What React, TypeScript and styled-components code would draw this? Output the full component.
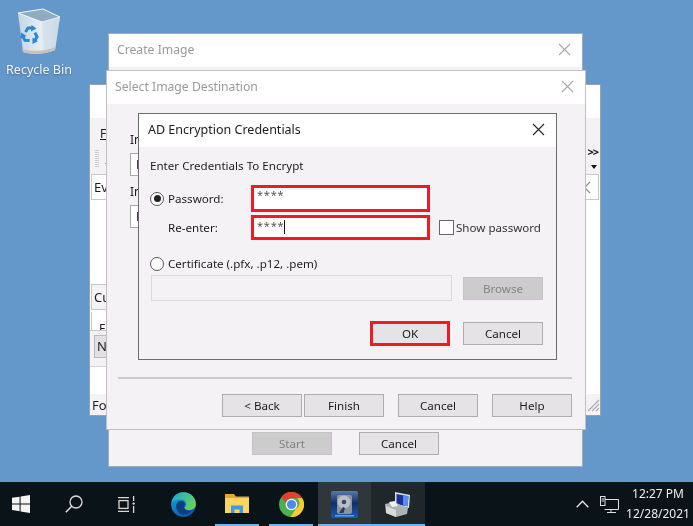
import React from "react";
import styled, { createGlobalStyle } from "styled-components";

const Global = createGlobalStyle`
  html, body { margin: 0; padding: 0; width: 693px; height: 526px; overflow: hidden; }
  #root { width: 693px; height: 526px; }
  * { box-sizing: border-box; }
`;

const Desktop = styled.div`
  width: 693px; height: 526px; display: flex; flex-direction: column;
  background: #6498cb; font-family: "Noto Sans", "Open Sans", sans-serif; font-size: 11.6px; color: #1c1c1c;
  overflow: hidden; filter: blur(.35px);
`;
const Workspace = styled.div`position: relative; height: 482px; flex: none;`;

const DesktopIcon = styled.div`
  position: absolute; left: 0; top: 7px; width: 78px; display: flex; flex-direction: column; align-items: center; gap: 7px;
  color: #f2f6fa; font-size: 12.5px; line-height: 16px; text-shadow: 0 1px 2px rgba(0,0,0,.35);
`;

const Win = styled.div<{ $x: number; $y: number; $w: number; $h: number; $edge: string }>`
  position: absolute; left: ${p => p.$x}px; top: ${p => p.$y}px; width: ${p => p.$w}px; height: ${p => p.$h}px;
  background: #f5f2f6; border: 1px solid ${p => p.$edge}; display: flex; flex-direction: column; overflow: hidden;
`;
const TitleBar = styled.div<{ $h: number; $pad: number; $active?: boolean }>`
  height: ${p => p.$h}px; flex: none; background: #fff; display: flex; align-items: center; justify-content: space-between;
  padding: 0 11px 2px ${p => p.$pad}px;
  color: ${p => p.$active ? "#202020" : "#9a9a9a"}; font-size: ${p => p.$active ? 12.5 : 12.2}px;
`;
const CloseGlyph = ({ c }: { c: string }) => (
  <svg width="13" height="13" viewBox="0 0 13 13"><path d="M1 1l11 11M12 1L1 12" stroke={c} strokeWidth="1.1" fill="none" /></svg>
);

const Btn = styled.div<{ $w?: number; $off?: boolean }>`
  width: ${p => p.$w ?? 80}px; height: 23px; flex: none; display: flex; align-items: center; justify-content: center;
  background: ${p => p.$off ? "#cccccc" : "#e6e3e7"}; border: 1px solid ${p => p.$off ? "#c4c4c4" : "#adadad"};
  color: ${p => p.$off ? "#838383" : "#1c1c1c"}; font-size: 11.6px;
`;

/* Back window (mostly hidden) */
const BackBody = styled.div`flex: 1; display: flex; flex-direction: column; background: #fff; position: relative;`;
const BackBand = styled.div`height: 56px; background: #f5f2f6; display: flex; flex-direction: column; align-items: flex-start; padding: 9px 0 0 10px; flex: none;`;
const MenuLetter = styled.span`text-decoration: underline; line-height: 14px; font-size: 12px;`;
const Grip = styled.div`
  width: 4px; height: 18px; margin-top: 9px; margin-left: -5px; position: relative;
  background: repeating-linear-gradient(to bottom, #cfcdd0 0 1px, #f5f2f6 1px 2px);
  &::after { content: ""; position: absolute; left: 10px; top: 13px; width: 2px; height: 1px; background: #5fc45f; }
`;
const Chevrons = styled.div`position: absolute; right: 2px; top: 28px; font-size: 11px; font-weight: 700; line-height: 12px; color: #111; letter-spacing: -1px;`;
const DownTri = styled.div`
  position: absolute; right: 3px; top: 47px; width: 0; height: 0;
  border-left: 3px solid transparent; border-right: 3px solid transparent; border-top: 4px solid #111;
`;
const TabBox = styled.div`
  height: 26px; margin-left: 1px; margin-right: 1px; display: flex; align-items: center; justify-content: space-between; background: #fff;
  border: 1px solid #c9c7ca; padding: 0 7px 0 2px; font-size: 13px; flex: none;
`;
const CuBox = styled.div`
  height: 26px; width: 60px; margin: 84px 0 0 1px; background: #f5f2f6; border: 1px solid #c9c7ca; padding-left: 2px; font-size: 13px; line-height: 24px; flex: none;
`;
const SubTab = styled.div`height: 18px; width: 40px; margin: 2px 0 0 1px; border-left: 1px solid #c9c7ca; font-size: 12px; padding: 11px 0 0 7px; line-height: 12px; overflow: hidden; flex: none;`;
const NeBand = styled.div`height: 37px; width: 60px; background: #f5f2f6; border-top: 1px solid #c9c7ca; border-bottom: 1px solid #d6d4d7; padding: 4px 0 0 4px; flex: none;`;
const NeBtn = styled.div`width: 56px; height: 23px; background: #e2e0e3; border: 1px solid #b9b7ba; padding-left: 2px; line-height: 21px; font-size: 13px;`;
const FoRow = styled.div`margin-top: auto; height: 21px; background: #f5f2f6; display: flex; justify-content: space-between; align-items: center; padding-left: 2px; font-size: 13px; flex: none;`;

/* Create Image footer */
const CreateFooter = styled.div`margin-top: auto; height: 34px; display: flex; padding-left: 143px; gap: 27px; flex: none;`;

/* Select Image Destination */
const SelectBody = styled.div`flex: 1; display: flex; flex-direction: column; padding: 28px 13px 0 11px; position: relative;`;
const StubLabel = styled.div`line-height: 16px; height: 16px; font-size: 12px; margin-left: 12px;`;
const StubField = styled.div<{ $gap: number }>`
  width: 60px; height: 23px; margin: 5px 0 ${p => p.$gap}px 12px; background: #fff; border: 1px solid #a9a9a9; padding-left: 5px; line-height: 21px; font-size: 12px;
`;
const Divider = styled.div`height: 2px; background: #c9c9c9; margin-top: auto;`;
const WizardRow = styled.div`display: flex; justify-content: flex-end; margin: 15px 0 12px; gap: 2px;`;
const Spacer = styled.div<{ $w: number }>`width: ${p => p.$w}px; flex: none;`;

/* AD dialog */
const DialogBody = styled.div`flex: 1; display: flex; flex-direction: column; padding: 11px 13px 0 11px;`;
const Heading = styled.div`height: 16px; line-height: 16px; margin-bottom: 11px;`;
const CredRow = styled.div<{ $mb: number }>`
  display: grid; grid-template-columns: 101px 179px auto; align-items: center; margin-bottom: ${p => p.$mb}px;
`;
const RadioLabel = styled.div`display: flex; align-items: center; gap: 4px; line-height: 16px;`;
const RadioDot = styled.span<{ $on?: boolean }>`
  width: 14px; height: 14px; border-radius: 50%; border: 1px solid #555; background: #fff; flex: none; position: relative; display: inline-block;
  &::after { content: ""; display: ${p => p.$on ? "block" : "none"}; position: absolute; inset: 2.5px; border-radius: 50%; background: #222; }
`;
const IndentLabel = styled.div`padding-left: 18px; line-height: 16px;`;
const RedField = styled.div<{ $h: number; $pt: number }>`
  height: ${p => p.$h}px; border: 3px solid #ed1c24; background: #fff; display: flex; align-items: flex-start; padding: ${p => p.$pt}px 0 0 3px;
  font-size: 11px; line-height: 12px; color: #555; letter-spacing: .8px;
`;
const Caret = styled.span`width: 1px; height: 14px; background: #111; flex: none;`;
const ShowPw = styled.div`display: flex; align-items: center; gap: 2px; margin-left: 9px; color: #333;`;
const Check = styled.span`width: 15px; height: 15px; background: #fff; border: 1px solid #666; flex: none;`;
const CertInputRow = styled.div`display: flex; justify-content: space-between; align-items: center; margin: 3px 0 20px 1px;`;
const CertInput = styled.div`width: 301px; height: 26px; background: #f5f2f6; border: 1px solid #dcdadd;`;
const DialogButtons = styled.div`display: flex; justify-content: flex-end; align-items: center; gap: 13px;`;
const OkFrame = styled.div`width: 80px; height: 25px; border: 3px solid #ed1c24; background: #e6e3e7; display: flex; align-items: center; justify-content: center;`;

/* Taskbar */
const Taskbar = styled.div`height: 44px; flex: none; background: #0a1318; display: flex; align-items: stretch; color: #f2f2f2;`;
const TaskItem = styled.div<{ $w: number; $ml?: number; $bg?: string; $line?: boolean; $pl?: number }>`
  width: ${p => p.$w}px; margin-left: ${p => p.$ml ?? 0}px; padding-left: ${p => p.$pl ?? 0}px; flex: none; display: flex; align-items: center; justify-content: center;
  background: ${p => p.$bg ?? "transparent"}; box-shadow: ${p => p.$line ? "inset 0 -2px 0 #70b4e8" : "none"};
`;
const Tray = styled.div`margin-left: auto; display: flex; align-items: center; padding-right: 4px;`;
const Clock = styled.div`display: flex; flex-direction: column; align-items: center; font-size: 12px; line-height: 20px; margin-left: 8px; width: 62px; color: #eee;`;

const RecycleBin = () => (
  <svg width="44" height="48" viewBox="0 0 44 48">
    <defs>
      <linearGradient id="rb" x1="0" y1="0" x2="1" y2="0">
        <stop offset="0" stopColor="#c3d5e3" /><stop offset=".55" stopColor="#e6eef4" /><stop offset="1" stopColor="#b4c8d8" />
      </linearGradient>
    </defs>
    <path d="M1 6L26 2 43 10 38 43C30 47 14 48 6 45Z" fill="url(#rb)" />
    <path d="M1 6L26 2 43 10 25 15Z" fill="#8fabc0" stroke="#f0f5f8" strokeWidth="1" />
    <path d="M25 15L43 10 38 43 27 46Z" fill="#d4e0ea" opacity=".7" />
    <path d="M6 45C14 48 30 47 38 43L38.500 40C30 44 14 45 5.500 42Z" fill="#c9c2b9" />
    {[0, 120, 240].map(a => (
      <g key={a} transform={`rotate(${a} 13 28)`}>
        <path d="M8.500 25L11 21H15" fill="none" stroke="#2a86d8" strokeWidth="3" />
        <path d="M14.500 18L19.500 21.500 14 24.500Z" fill="#2a86d8" />
      </g>
    ))}
  </svg>
);
const WinLogo = () => (
  <svg width="18" height="18" viewBox="0 0 18 18" fill="#f4f4f4">
    <path d="M0 2.800L7.600 1.700V8.400H0zM8.600 1.600L18 0V8.400H8.600zM0 9.400H7.600V16.200L0 15.100zM8.600 9.400H18V18L8.600 16.400z" />
  </svg>
);
const SearchIcon = () => (
  <svg width="18" height="18" viewBox="0 0 18 18" fill="none" stroke="#dcdcdc" strokeWidth="1.300">
    <circle cx="11" cy="7" r="6" /><path d="M6.700 11.300L.8 17.200" strokeWidth="1.600" />
  </svg>
);
const TaskView = () => (
  <svg width="18" height="17" viewBox="0 0 18 17" fill="none" stroke="#d8d8d8" strokeWidth="1.300">
    <path d="M0 1.600h11M0 15.400h11" /><rect x="1" y="4.600" width="9" height="7.800" /><path d="M15.600 0v5M15.600 10v7" /><circle cx="15.600" cy="7.600" r="1.200" fill="#d8d8d8" stroke="none" />
  </svg>
);
const EdgeIcon = () => (
  <svg width="27" height="27" viewBox="0 0 24 24">
    <defs>
      <linearGradient id="e1" x1="0" y1="0" x2=".6" y2="1"><stop offset="0" stopColor="#1fa6e6" /><stop offset="1" stopColor="#0b5aa8" /></linearGradient>
      <linearGradient id="e2" x1="0" y1=".2" x2="1" y2=".7"><stop offset="0" stopColor="#1ea9cf" /><stop offset="1" stopColor="#6bd35a" /></linearGradient>
    </defs>
    <circle cx="12" cy="12" r="11" fill="url(#e1)" />
    <path d="M1.400 9.500C3 4 7 1 12 1c6.200 0 11 4.800 11 10.500 0 3.500-3 5.500-6 5.500-2.300 0-4-.9-4-1.900 0-.8 1.400-1.300 1.400-3.100C14.400 9.500 12.300 7.500 9.500 7.500 6 7.500 3 8 1.400 9.500z" fill="url(#e2)" />
    <path d="M5.500 13.500C5.500 10.500 7.600 8.800 10 8.800c2 0 3.300 1.300 3.300 3 0 .8-.6 1.500-.9 2.200-.4 1.500 1.800 3.400 5.100 3.400 1 0 1.600-.1 2.200-.3-1.800 2.500-4.500 3.900-7.700 3.900-3.800 0-6.500-4-6.500-7.500z" fill="#0d3f7f" />
  </svg>
);
const FolderIcon = () => (
  <svg width="24" height="20" viewBox="0 0 24 20">
    <path d="M0 0h9l2 2.500h13v16H0z" fill="#e0a92e" />
    <path d="M0 4h24v15H0z" fill="#fbd563" />
    <path d="M6 19v-7.500h12V19h-3.500v-3.500h-5V19z" fill="#3f9be0" />
  </svg>
);
const ChromeIcon = () => (
  <svg width="25" height="25" viewBox="0 0 24 24">
    <circle cx="12" cy="12" r="12" fill="#4caf50" />
    <path d="M12 0a12 12 0 0 1 10.400 6H12a6 6 0 0 0-5.700 4.100L2.100 5A12 12 0 0 1 12 0z" fill="#df4133" />
    <path d="M22.400 6A12 12 0 0 1 11 24l5.300-8a6 6 0 0 0 1-10z" fill="#fcc934" />
    <circle cx="12" cy="12" r="5.600" fill="#fff" /><circle cx="12" cy="12" r="4.400" fill="#4a8df0" />
  </svg>
);
const DiskIcon = () => (
  <svg width="27" height="27" viewBox="0 0 27 27">
    <defs><linearGradient id="d1" x1="0" y1="0" x2="0" y2="1"><stop offset="0" stopColor="#587aa4" /><stop offset=".45" stopColor="#0f3169" /><stop offset="1" stopColor="#1c5cac" /></linearGradient></defs>
    <rect width="27" height="27" rx="2" fill="url(#d1)" />
    <rect x="6" y="4" width="15" height="19" rx="2" fill="#8b95a2" />
    <circle cx="13" cy="11" r="6.500" fill="#b9bfc7" />
    <circle cx="13" cy="11" r="2.300" fill="#3d4a5c" />
    <path d="M8 22l4-6 2 1-1.500 5z" fill="#2a3a55" />
    <rect x="4" y="24" width="19" height="1.500" fill="#5aa0e6" />
  </svg>
);
const InstallIcon = () => (
  <svg width="26" height="26" viewBox="0 0 26 26">
    <path d="M10 1l15 3-1 13-14-2z" fill="#d8dde2" />
    <path d="M11.500 3l12 2.300-1 10-11-2z" fill="#14339f" />
    <path d="M18 4.300l5.500 1-1 10-4.500-.9z" fill="#5b8bec" />
    <path d="M0 13l9-2 14 6-1 6-11 3-10-4z" fill="#aab4b0" />
    <path d="M1 15l10 4v7l-10-4z" fill="#d5dbd8" />
    <path d="M4 11l6-1 3 5-6 1z" fill="#eef1ef" />
  </svg>
);
const NetIcon = () => (
  <svg width="19" height="17" viewBox="0 0 19 17" fill="none" stroke="#e0e0e0" strokeWidth="1">
    <path d="M4.500 3.500h14v10h-14" /><path d="M11 13.500v2.500M7 16.500h9" /><rect x=".5" y=".5" width="4.500" height="9" fill="#0a1318" /><path d="M1.500 3h2.500M1.500 5h2.500" />
  </svg>
);
const Chevron = () => (
  <svg width="13" height="8" viewBox="0 0 13 8" fill="none" stroke="#e6e6e6" strokeWidth="1.300"><path d="M.7 7.300L6.500 1.200l5.800 6.100" /></svg>
);
const GripMark = () => (
  <svg width="14" height="14" viewBox="0 0 14 14" stroke="#a9a9a9" strokeWidth="1.100"><path d="M13 2L2 13M13 6L6 13M13 10L10 13" /></svg>
);

export default function App() {
  return (
    <Desktop>
      <Global />
      <Workspace>
        <DesktopIcon><RecycleBin />Recycle Bin</DesktopIcon>

        <Win $x={108} $y={33} $w={475} $h={434} $edge="#a5abb2">
          <TitleBar $h={33} $pad={8}>Create Image<CloseGlyph c="#a8a8a8" /></TitleBar>
          <CreateFooter>
            <Btn $off>Start</Btn>
            <Btn>Cancel</Btn>
          </CreateFooter>
        </Win>

        <Win $x={89} $y={84} $w={512} $h={332} $edge="#9aa1a8">
          <TitleBar $h={33} $pad={9} />
          <BackBody>
            <BackBand>
              <MenuLetter>F</MenuLetter>
              <Grip />
            </BackBand>
            <Chevrons>&gt;&gt;</Chevrons>
            <DownTri />
            <TabBox>Ev<CloseGlyph c="#8a8a8a" /></TabBox>
            <CuBox>Cu</CuBox>
            <SubTab>F</SubTab>
            <NeBand><NeBtn>Ne</NeBtn></NeBand>
            <FoRow>Fo<GripMark /></FoRow>
          </BackBody>
        </Win>

        <Win $x={106} $y={70} $w={480} $h={360} $edge="#c2bfc3">
          <TitleBar $h={33} $pad={8}>Select Image Destination<CloseGlyph c="#a8a8a8" /></TitleBar>
          <SelectBody>
            <StubLabel>In</StubLabel>
            <StubField $gap={8}>E</StubField>
            <StubLabel>In</StubLabel>
            <StubField $gap={0}>F</StubField>
            <Divider />
            <WizardRow>
              <Btn>&lt; Back</Btn>
              <Btn>Finish</Btn>
              <Spacer $w={10} />
              <Btn>Cancel</Btn>
              <Spacer $w={10} />
              <Btn>Help</Btn>
            </WizardRow>
          </SelectBody>
        </Win>

        <Win $x={138} $y={113} $w={419} $h={247} $edge="#6c6c6c">
          <TitleBar $h={33} $pad={9} $active>AD Encryption Credentials<CloseGlyph c="#222" /></TitleBar>
          <DialogBody>
            <Heading>Enter Credentials To Encrypt</Heading>
            <CredRow $mb={3}>
              <RadioLabel><RadioDot $on />Password:</RadioLabel>
              <RedField $h={27} $pt={1}>****</RedField>
            </CredRow>
            <CredRow $mb={16}>
              <IndentLabel>Re-enter:</IndentLabel>
              <RedField $h={25} $pt={2}>****<Caret /></RedField>
              <ShowPw><Check />Show password</ShowPw>
            </CredRow>
            <RadioLabel><RadioDot />Certificate (.pfx, .p12, .pem)</RadioLabel>
            <CertInputRow>
              <CertInput />
              <Btn $off>Browse</Btn>
            </CertInputRow>
            <DialogButtons>
              <OkFrame>OK</OkFrame>
              <Btn>Cancel</Btn>
            </DialogButtons>
          </DialogBody>
        </Win>
      </Workspace>

      <Taskbar>
        <TaskItem $w={42}><WinLogo /></TaskItem>
        <TaskItem $w={64}><SearchIcon /></TaskItem>
        <TaskItem $w={41}><TaskView /></TaskItem>
        <TaskItem $w={68} $pl={4}><EdgeIcon /></TaskItem>
        <TaskItem $w={44} $line><FolderIcon /></TaskItem>
        <TaskItem $w={44} $ml={10} $line><ChromeIcon /></TaskItem>
        <TaskItem $w={53} $ml={5} $bg="#2f373b" $line><DiskIcon /></TaskItem>
        <TaskItem $w={54} $bg="#1f272b" $line><InstallIcon /></TaskItem>
        <Tray>
          <Chevron />
          <TaskItem $w={19} $ml={11}><NetIcon /></TaskItem>
          <Clock><span>12:27 PM</span><span>12/28/2021</span></Clock>
        </Tray>
      </Taskbar>
    </Desktop>
  );
}
